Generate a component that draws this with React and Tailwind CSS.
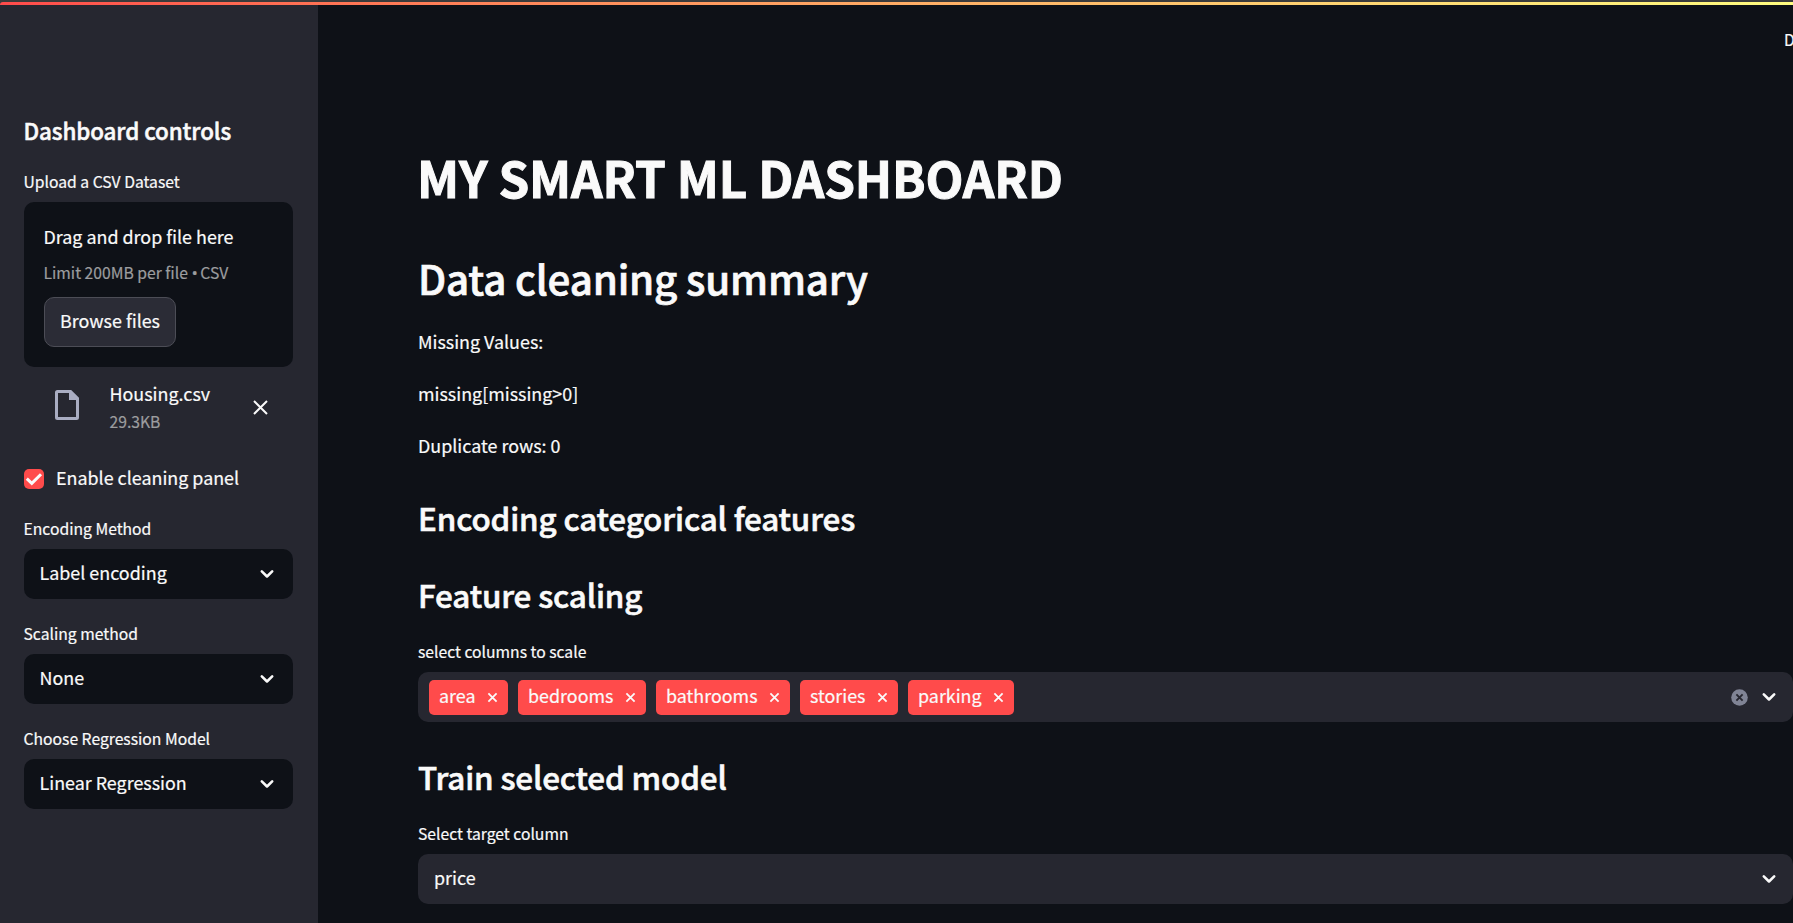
function Chevron({ className = '' }) {
  return (
    <svg className={`shrink-0 ${className}`} width="20" height="20" viewBox="0 0 20 20" fill="none" stroke="#fafafa" strokeWidth="2.6" strokeLinecap="round" strokeLinejoin="round">
      <path d="M4.8 7.4 L10 12.5 L15.2 7.4" />
    </svg>
  );
}

function Label({ children, className = '' }) {
  return <div className={`pt-px text-[15.7px] leading-5 whitespace-nowrap ${className}`}>{children}</div>;
}

function SidebarSelect({ label, value, className = '' }) {
  return (
    <div className={className}>
      <Label className="-ml-[0.5px]">{label}</Label>
      <div className="mt-[10px] flex h-[50px] items-center justify-between rounded-[10px] bg-[#0e1117] pr-4 pl-[15.5px]">
        <span className="pb-1 text-[17.9px] leading-6">{value}</span>
        <Chevron />
      </div>
    </div>
  );
}

function Heading({ children, className = '' }) {
  return (
    <h3 className={`pt-px text-[31.4px] leading-10 font-medium tracking-[-0.14px] whitespace-nowrap [-webkit-text-stroke:0.6px_#fafafa] ${className}`}>
      {children}
    </h3>
  );
}

function Chip({ children, className = '' }) {
  return (
    <div className={`flex h-[35px] items-center justify-between rounded-[5px] bg-[#ff4b4b] pr-[10px] pl-[10px] ${className}`}>
      <span className="pb-1 text-[17.9px] leading-6">{children}</span>
      <svg width="11" height="11" viewBox="0 0 11 11" fill="none" stroke="#fafafa" strokeWidth="1.8">
        <path d="M1.4 1.4 L9.6 9.6 M9.6 1.4 L1.4 9.6" />
      </svg>
    </div>
  );
}

function Sidebar() {
  return (
    <aside className="w-[318px] shrink-0 bg-[#262730] pt-[110px] pr-[25px] pl-6">
      <h2 className="-ml-[0.5px] text-[22.4px] leading-[30px] font-medium tracking-[-0.1px] [-webkit-text-stroke:0.5px_#fafafa]">Dashboard controls</h2>
      <Label className="mt-[26px] -ml-[0.5px]">Upload a CSV Dataset</Label>
      <div className="mt-[10px] h-[165px] rounded-[10px] bg-[#0e1117] px-5 pt-[22px]">
        <div className="-ml-[0.5px] text-[17.9px] leading-6">Drag and drop file here</div>
        <div className="-ml-[0.5px] mt-[15px] text-[15.7px] leading-5 whitespace-nowrap text-[#9c9d9f]">
          Limit 200MB per file <span className="font-['Open_Sans'] text-[17px] leading-none tracking-[-1px]">•</span> CSV
        </div>
        <button className="mt-[14px] flex h-[50px] w-[132px] items-center justify-center rounded-[10px] border border-[#4c4d56] bg-[#2b2c36] pb-1 text-[17.9px] leading-6">
          Browse files
        </button>
      </div>
      <div className="mt-[14px] flex h-[50px] pr-[24px] pl-[31px]">
        <svg width="24" height="30" viewBox="0 0 24 30" className="mt-[9px] shrink-0">
          <path fill="#a9adc2" fillRule="evenodd" d="M2.5 0 H16.2 L24 7.8 V27.5 Q24 30 21.5 30 H2.5 Q0 30 0 27.5 V2.5 Q0 0 2.5 0 Z M3 3 V27 H21 V10 H14 V3 Z" />
        </svg>
        <div className="ml-[30.5px] flex-1">
          <div className="text-[17.9px] leading-6">Housing.csv</div>
          <div className="mt-[7px] text-[15.7px] leading-5 text-[#9c9d9f]">29.3KB</div>
        </div>
        <svg width="17" height="17" viewBox="0 0 17 17" className="mt-[18px] shrink-0" fill="none" stroke="#fafafa" strokeWidth="2">
          <path d="M2 2 L15 15 M15 2 L2 15" />
        </svg>
      </div>
      <div className="mt-[34px] flex h-6 items-end gap-[12px]">
        <div className="flex h-5 w-5 items-center justify-center rounded-[5px] bg-[#ff4b4b]">
          <svg width="20" height="20" viewBox="0 0 20 20" fill="none" stroke="#fafafa" strokeWidth="3">
            <path d="M2.8 9.6 L7.8 14.4 L17 5.2" />
          </svg>
        </div>
        <span className="text-[17.9px] leading-6">Enable cleaning panel</span>
      </div>
      <SidebarSelect className="mt-[29px]" label="Encoding Method" value="Label encoding" />
      <SidebarSelect className="mt-6" label="Scaling method" value="None" />
      <SidebarSelect className="mt-6" label="Choose Regression Model" value="Linear Regression" />
    </aside>
  );
}

export default function App() {
  return (
    <div className="flex h-[923px] w-full flex-col overflow-hidden bg-[#0e1117] font-['Noto_Sans_CJK_SC',sans-serif] text-[#fafafa] [-webkit-text-stroke:0.2px_currentColor]">
      <div className="h-[5px] shrink-0 bg-[#3b3b3b] pt-[2px]">
        <div className="h-[3px] rounded-tl-[6px] bg-linear-to-r from-[#ff4b4b] to-[#fffd80]" />
      </div>
      <div className="flex min-h-0 flex-1">
        <Sidebar />
        <main className="min-w-0 flex-1 overflow-hidden pl-[100px]">
          <div className="ml-auto h-[141px] w-[9px] overflow-hidden pt-[24px]">
            <Label>Deploy</Label>
          </div>
          <h1 className="-ml-px text-[49.3px] leading-[61px] font-bold tracking-[-0.12px] whitespace-nowrap [-webkit-text-stroke:1px_#fafafa]">
            MY SMART ML DASHBOARD
          </h1>
          <h2 className="mt-[45px] text-[40.3px] leading-[51px] font-medium tracking-[-0.16px] whitespace-nowrap [-webkit-text-stroke:0.7px_#fafafa]">
            Data cleaning summary
          </h2>
          <div className="mt-[26px] flex flex-col gap-7 text-[17.9px] leading-6">
            <p>Missing Values:</p>
            <p>missing[missing&gt;0]</p>
            <p>Duplicate rows: 0</p>
          </div>
          <Heading className="mt-10">Encoding categorical features</Heading>
          <Heading className="mt-[36px]">Feature scaling</Heading>
          <Label className="mt-[26px]">select columns to scale</Label>
          <div className="mt-[10px] flex h-[50px] items-center rounded-[10px] bg-[#262730] pr-[14px] pl-[11px]">
            <div className="flex flex-1 gap-[10px]">
              <Chip className="w-[79px]">area</Chip>
              <Chip className="w-[128px]">bedrooms</Chip>
              <Chip className="w-[134px]">bathrooms</Chip>
              <Chip className="w-[98px]">stories</Chip>
              <Chip className="w-[106px]">parking</Chip>
            </div>
            <svg width="17" height="17" viewBox="0 0 17 17" className="mr-[11.5px] shrink-0">
              <circle cx="8.5" cy="8.5" r="8.3" fill="#808495" />
              <path d="M5.4 5.4 L11.6 11.6 M11.6 5.4 L5.4 11.6" stroke="#262730" strokeWidth="1.9" fill="none" />
            </svg>
            <Chevron />
          </div>
          <Heading className="mt-[34px]">Train selected model</Heading>
          <Label className="mt-[26px]">Select target column</Label>
          <div className="mt-[10px] flex h-[50px] items-center justify-between rounded-[10px] bg-[#262730] pr-[14px] pl-4">
            <span className="pb-1 text-[17.9px] leading-6">price</span>
            <Chevron />
          </div>
        </main>
      </div>
    </div>
  );
}
